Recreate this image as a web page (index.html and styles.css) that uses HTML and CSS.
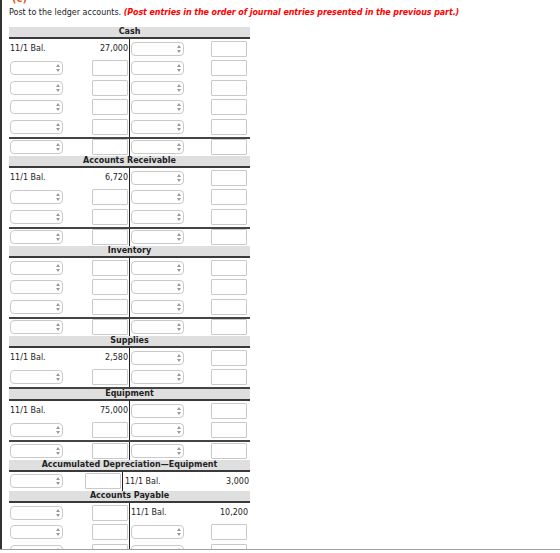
FILE: index.html
```html
<!DOCTYPE html>
<html>
<head>
	<meta charset="UTF-8"/>
	<link rel="stylesheet" href="styles.css">
</head>
<body>
<div class="page">
	<div class="part">(c)</div>
	<p class="intro">Post to the ledger accounts. <em class="note">(Post entries in the order of journal entries presented in the previous part.)</em></p>

	<!--现金-->
	<div class="acct">
		<div class="acct-name">Cash</div>
		<div class="row">
			<div class="side txt"><span>11/1 Bal.</span><span>27,000</span></div>
			<div class="side"><span class="drop"><select></select></span><input type="text"/></div>
		</div>
		<div class="row">
			<div class="side"><span class="drop"><select></select></span><input type="text"/></div>
			<div class="side"><span class="drop"><select></select></span><input type="text"/></div>
		</div>
		<div class="row">
			<div class="side"><span class="drop"><select></select></span><input type="text"/></div>
			<div class="side"><span class="drop"><select></select></span><input type="text"/></div>
		</div>
		<div class="row">
			<div class="side"><span class="drop"><select></select></span><input type="text"/></div>
			<div class="side"><span class="drop"><select></select></span><input type="text"/></div>
		</div>
		<div class="row">
			<div class="side"><span class="drop"><select></select></span><input type="text"/></div>
			<div class="side"><span class="drop"><select></select></span><input type="text"/></div>
		</div>
		<div class="row total">
			<div class="side"><span class="drop"><select></select></span><input type="text"/></div>
			<div class="side"><span class="drop"><select></select></span><input type="text"/></div>
		</div>
	</div>

	<!--应收账款-->
	<div class="acct">
		<div class="acct-name">Accounts Receivable</div>
		<div class="row">
			<div class="side txt"><span>11/1 Bal.</span><span>6,720</span></div>
			<div class="side"><span class="drop"><select></select></span><input type="text"/></div>
		</div>
		<div class="row">
			<div class="side"><span class="drop"><select></select></span><input type="text"/></div>
			<div class="side"><span class="drop"><select></select></span><input type="text"/></div>
		</div>
		<div class="row">
			<div class="side"><span class="drop"><select></select></span><input type="text"/></div>
			<div class="side"><span class="drop"><select></select></span><input type="text"/></div>
		</div>
		<div class="row total">
			<div class="side"><span class="drop"><select></select></span><input type="text"/></div>
			<div class="side"><span class="drop"><select></select></span><input type="text"/></div>
		</div>
	</div>

	<!--存货-->
	<div class="acct">
		<div class="acct-name">Inventory</div>
		<div class="row">
			<div class="side"><span class="drop"><select></select></span><input type="text"/></div>
			<div class="side"><span class="drop"><select></select></span><input type="text"/></div>
		</div>
		<div class="row">
			<div class="side"><span class="drop"><select></select></span><input type="text"/></div>
			<div class="side"><span class="drop"><select></select></span><input type="text"/></div>
		</div>
		<div class="row">
			<div class="side"><span class="drop"><select></select></span><input type="text"/></div>
			<div class="side"><span class="drop"><select></select></span><input type="text"/></div>
		</div>
		<div class="row total">
			<div class="side"><span class="drop"><select></select></span><input type="text"/></div>
			<div class="side"><span class="drop"><select></select></span><input type="text"/></div>
		</div>
	</div>

	<!--物料-->
	<div class="acct">
		<div class="acct-name">Supplies</div>
		<div class="row">
			<div class="side txt"><span>11/1 Bal.</span><span>2,580</span></div>
			<div class="side"><span class="drop"><select></select></span><input type="text"/></div>
		</div>
		<div class="row">
			<div class="side"><span class="drop"><select></select></span><input type="text"/></div>
			<div class="side"><span class="drop"><select></select></span><input type="text"/></div>
		</div>
		<div class="row total bare"></div>
	</div>

	<!--设备-->
	<div class="acct">
		<div class="acct-name">Equipment</div>
		<div class="row">
			<div class="side txt"><span>11/1 Bal.</span><span>75,000</span></div>
			<div class="side"><span class="drop"><select></select></span><input type="text"/></div>
		</div>
		<div class="row">
			<div class="side"><span class="drop"><select></select></span><input type="text"/></div>
			<div class="side"><span class="drop"><select></select></span><input type="text"/></div>
		</div>
		<div class="row total">
			<div class="side"><span class="drop"><select></select></span><input type="text"/></div>
			<div class="side"><span class="drop"><select></select></span><input type="text"/></div>
		</div>
	</div>

	<!--累计折旧-->
	<div class="acct narrow">
		<div class="acct-name">Accumulated Depreciation&mdash;Equipment</div>
		<div class="row">
			<div class="side"><span class="drop"><select></select></span><input type="text"/></div>
			<div class="side txt"><span>11/1 Bal.</span><span>3,000</span></div>
		</div>
	</div>

	<!--应付账款-->
	<div class="acct">
		<div class="acct-name">Accounts Payable</div>
		<div class="row">
			<div class="side"><span class="drop"><select></select></span><input type="text"/></div>
			<div class="side txt"><span>11/1 Bal.</span><span>10,200</span></div>
		</div>
		<div class="row">
			<div class="side"><span class="drop"><select></select></span><input type="text"/></div>
			<div class="side"><span class="drop"><select></select></span><input type="text"/></div>
		</div>
		<div class="row">
			<div class="side"><span class="drop"><select></select></span><input type="text"/></div>
			<div class="side"><span class="drop"><select></select></span><input type="text"/></div>
		</div>
		<div class="row">
			<div class="side"><span class="drop"><select></select></span><input type="text"/></div>
			<div class="side"><span class="drop"><select></select></span><input type="text"/></div>
		</div>
	</div>
</div>
<div class="foot"></div>
</body>
</html>
```

FILE: styles.css
```css
*{
	margin:0;
	padding:0;
	box-sizing:border-box;
}
body{
	font-family:"DejaVu Sans",Verdana,sans-serif;
	font-size:8px;
	color:#222;
	background:#fff;
}
.page{
	border-left:2px solid #333;
	padding-left:7px;
	min-height:100vh;
}
.part{
	margin-top:-7px;
	height:11px;
	line-height:12px;
	padding-left:3px;
	font-size:10px;
	font-weight:bold;
	color:#e9561f;
}
.intro{
	line-height:17px;
	margin-bottom:6px;
}
.note{
	color:#f00;
	font-weight:bold;
	font-style:italic;
	letter-spacing:-0.1px;
}
/* T字账户 */
.acct{
	width:241px;
}
.acct-name{
	height:12px;
	line-height:10px;
	background:#dfdfdf;
	border-bottom:2px solid #3a3a3a;
	text-align:center;
	font-weight:bold;
}
.row{
	display:flex;
	height:19.5px;
}
.side{
	width:120px;
	display:flex;
	align-items:center;
	justify-content:space-between;
	padding:0 1px;
}
.side+.side{
	border-left:1px solid #222;
	padding-right:2px;
}
.side.txt{
	padding-right:1px;
}
.total{
	border-top:2px solid #444;
}
.total.bare{
	height:2px;
}
.narrow .side:first-child{
	width:113px;
}
.narrow .side+.side{
	width:128px;
	padding-left:2px;
}
/* 下拉框 */
.drop{
	position:relative;
	width:53px;
	height:14px;
}
.drop select{
	appearance:none;
	-webkit-appearance:none;
	width:100%;
	height:100%;
	border:1px solid #c9c9c9;
	border-radius:4px;
	background:#fff;
}
.drop::before,.drop::after{
	content:"";
	position:absolute;
	right:3px;
	border-left:2px solid transparent;
	border-right:2px solid transparent;
}
.drop::before{
	top:3px;
	border-bottom:3px solid #999;
}
.drop::after{
	bottom:3px;
	border-top:3px solid #999;
}
input{
	width:36px;
	height:16px;
	border:1px solid #c9c9c9;
	border-radius:1px;
	background:#fff;
}
.foot{
	position:fixed;
	left:0;
	right:0;
	bottom:0;
	height:4px;
	border-top:1px solid #a0a0a0;
	background:#fff;
}
```
